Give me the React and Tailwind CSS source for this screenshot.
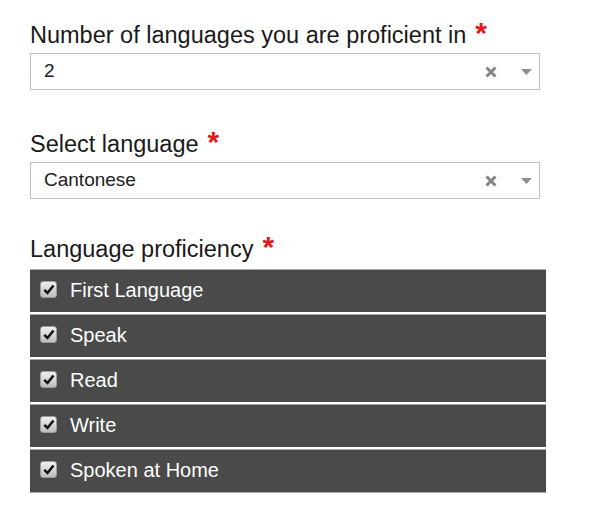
import React from 'react';

const font = { fontFamily: '"Liberation Sans", Arial, sans-serif' };

const Label = ({ children, className = '' }) => (
  <div className={`h-[30px] text-[23.5px] leading-[30px] text-[#1a1a1a] ${className}`}>
    <span>{children}</span>
    <span className="ml-[9px] text-[30px] leading-[0] text-[#e8151b] font-bold">*</span>
  </div>
);

const ClearIcon = () => (
  <svg width="12" height="12" viewBox="0 0 12 12">
    <path d="M1.5 1.5 L10.5 10.5 M10.5 1.5 L1.5 10.5" stroke="#858585" strokeWidth="3" />
  </svg>
);

const Caret = () => (
  <svg width="11" height="6" viewBox="0 0 11 6">
    <path d="M0 0 H11 L5.5 6 Z" fill="#8f8f8f" />
  </svg>
);

const Select = ({ value }) => (
  <div className="mt-[3px] w-[510px] h-[37px] flex items-center border border-[#c2c2c2] bg-white pl-[13px] pr-[7px]">
    <span className="flex-1 text-[19px] text-[#222]">{value}</span>
    <span className="flex items-center mr-[24px]">
      <ClearIcon />
    </span>
    <span className="flex items-center">
      <Caret />
    </span>
  </div>
);

const Checkbox = () => (
  <span className="mb-[4px] w-[17px] h-[17px] rounded-[3px] border border-[#9c9c9c] bg-gradient-to-b from-[#f0f0f0] to-[#bdbdbd] flex items-center justify-center">
    <svg width="12" height="11" viewBox="0 0 12 11">
      <path d="M1.3 5.8 L4.5 9 L10.5 1.5" stroke="#111" strokeWidth="2.5" fill="none" />
    </svg>
  </span>
);

const options = ['First Language', 'Speak', 'Read', 'Write', 'Spoken at Home'];

export default function App() {
  return (
    <div className="w-[604px] h-[508px] bg-white pl-[30px] pt-[20px]" style={font}>
      <Label>Number of languages you are proficient in</Label>
      <Select value="2" />

      <Label className="mt-[39px]">Select language</Label>
      <Select value="Cantonese" />

      <Label className="mt-[35px]">Language proficiency</Label>
      <div className="mt-[5px] w-[516px] flex flex-col gap-[2px] border-b border-[#a8a8a8]">
        {options.map((opt) => (
          <div key={opt} className="border-t border-[#a8a8a8] bg-[#4a4a4a] h-[43px] flex items-center pl-[10px] gap-[13px]">
            <Checkbox />
            <span className="mb-[2px] text-[20px] text-white">{opt}</span>
          </div>
        ))}
      </div>
    </div>
  );
}
